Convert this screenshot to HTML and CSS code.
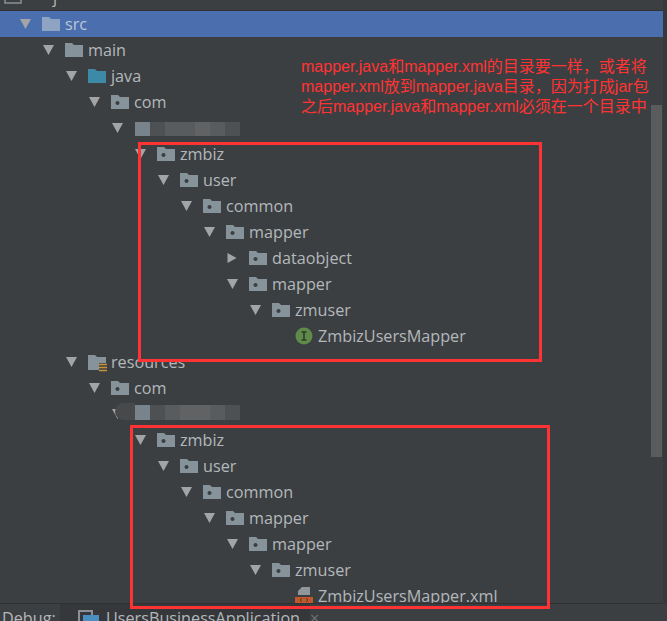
FILE: index.html
```html
<!DOCTYPE html>
<html lang="en">
<head>
    <meta charset="UTF-8">
    <meta name="viewport" content="width=device-width, initial-scale=1.0">
    <title>Project tree</title>
    <link rel="stylesheet" href="styles.css">
</head>
<body>

<svg class="defs" width="0" height="0">
    <symbol id="open" viewBox="0 0 11 10"><path d="M0 0H11L5.5 10Z"/></symbol>
    <symbol id="closed" viewBox="0 0 11 11"><path d="M0 0L10 5.5L0 11Z"/></symbol>
    <symbol id="folder" viewBox="0 0 18 14"><path d="M0 0H7L9 2H18V14H0Z"/></symbol>
    <symbol id="package" viewBox="0 0 18 14"><path fill-rule="evenodd" d="M0 0H7L9 2H18V14H0ZM6.5 6A2 2 0 1 0 6.51 6Z"/></symbol>
</svg>

<div class="top-bar">
    <svg class="top-icon" width="18" height="4"><path d="M1 0V3H17V0" fill="none" stroke="#8b9197" stroke-width="1.5"/></svg>
    <span class="top-label">j</span>
</div>

<div class="tree">
    <div class="row lv-0 selected"><svg class="arrow"><use href="#open"/></svg><svg class="icon icon-src"><use href="#folder"/></svg><span>src</span></div>
    <div class="row lv-1"><svg class="arrow"><use href="#open"/></svg><svg class="icon"><use href="#folder"/></svg><span>main</span></div>
    <div class="row lv-2"><svg class="arrow"><use href="#open"/></svg><svg class="icon icon-java"><use href="#folder"/></svg><span>java</span></div>
    <div class="row lv-3"><svg class="arrow"><use href="#open"/></svg><svg class="icon"><use href="#package"/></svg><span>com</span></div>
    <div class="row lv-4"><svg class="arrow"><use href="#open"/></svg></div>
    <div class="row lv-5"><svg class="arrow"><use href="#open"/></svg><svg class="icon"><use href="#package"/></svg><span>zmbiz</span></div>
    <div class="row lv-6"><svg class="arrow"><use href="#open"/></svg><svg class="icon"><use href="#package"/></svg><span>user</span></div>
    <div class="row lv-7"><svg class="arrow"><use href="#open"/></svg><svg class="icon"><use href="#package"/></svg><span>common</span></div>
    <div class="row lv-8"><svg class="arrow"><use href="#open"/></svg><svg class="icon"><use href="#package"/></svg><span>mapper</span></div>
    <div class="row lv-9"><svg class="arrow"><use href="#closed"/></svg><svg class="icon"><use href="#package"/></svg><span>dataobject</span></div>
    <div class="row lv-9"><svg class="arrow"><use href="#open"/></svg><svg class="icon"><use href="#package"/></svg><span>mapper</span></div>
    <div class="row lv-10"><svg class="arrow"><use href="#open"/></svg><svg class="icon"><use href="#package"/></svg><span>zmuser</span></div>
    <div class="row lv-11">
        <span class="no-arrow"></span>
        <svg class="icon icon-file" viewBox="0 0 18 18">
            <circle cx="9" cy="9" r="8.5" fill="#5e8a4a"/>
            <path d="M6.5 5H11.5M9 5V13M6.5 13H11.5" fill="none" stroke="#2f3a2c" stroke-width="1.6"/>
        </svg>
        <span>ZmbizUsersMapper</span>
    </div>
    <div class="row lv-2">
        <svg class="arrow"><use href="#open"/></svg>
        <svg class="icon icon-res" viewBox="0 0 20 18">
            <path d="M0 0H7L9 2H18V8H11V15H0Z" fill="#87939a"/>
            <path d="M11 9.5H19M11 12.5H19M11 15.5H19" fill="none" stroke="#c9953c" stroke-width="1.6"/>
        </svg>
        <span>resources</span>
    </div>
    <div class="row lv-3"><svg class="arrow"><use href="#open"/></svg><svg class="icon"><use href="#package"/></svg><span>com</span></div>
    <div class="row lv-4"><svg class="arrow"><use href="#open"/></svg></div>
    <div class="row lv-5"><svg class="arrow"><use href="#open"/></svg><svg class="icon"><use href="#package"/></svg><span>zmbiz</span></div>
    <div class="row lv-6"><svg class="arrow"><use href="#open"/></svg><svg class="icon"><use href="#package"/></svg><span>user</span></div>
    <div class="row lv-7"><svg class="arrow"><use href="#open"/></svg><svg class="icon"><use href="#package"/></svg><span>common</span></div>
    <div class="row lv-8"><svg class="arrow"><use href="#open"/></svg><svg class="icon"><use href="#package"/></svg><span>mapper</span></div>
    <div class="row lv-9"><svg class="arrow"><use href="#open"/></svg><svg class="icon"><use href="#package"/></svg><span>mapper</span></div>
    <div class="row lv-10"><svg class="arrow"><use href="#open"/></svg><svg class="icon"><use href="#package"/></svg><span>zmuser</span></div>
    <div class="row lv-11">
        <span class="no-arrow"></span>
        <svg class="icon icon-file" viewBox="0 0 18 18">
            <path d="M7 0H15V8H3V4Z" fill="#8f979c"/>
            <rect y="10" width="18" height="8" fill="#c2582a"/>
            <path d="M7 11L5 13L7 15M11 11L13 13L11 15" fill="none" stroke="#3c3f41" stroke-width="1"/>
        </svg>
        <span>ZmbizUsersMapper.xml</span>
    </div>

    <!-- Verborgen pakketnamen -->
    <div class="mosaic mosaic-java">
        <i class="m1"></i><i class="m2"></i><i class="m3"></i><i class="m3"></i><i class="m4"></i><i class="m3"></i><i class="m2"></i>
    </div>
    <div class="mosaic mosaic-res">
        <i class="m1"></i><i class="m2"></i><i class="m3"></i><i class="m4"></i><i class="m4"></i><i class="m3"></i><i class="m2"></i>
    </div>

    <!-- Aantekening -->
    <div class="note">mapper.java和mapper.xml的目录要一样，或者将<br>mapper.xml放到mapper.java目录，因为打成jar包<br>之后mapper.java和mapper.xml必须在一个目录中</div>
</div>

<div class="scrollbar"></div>
<div class="right-strip"></div>

<div class="debug-bar">
    <span class="debug-label">Debug:</span>
    <div class="debug-tab">
        <svg class="tab-icon" width="22" height="18">
            <rect x="1" y="1" width="13" height="15" fill="none" stroke="#8b9197" stroke-width="2"/>
            <rect x="5" y="5" width="16" height="13" fill="#4a8fbf"/>
        </svg>
        <span>UsersBusinessApplication</span>
        <span class="tab-close">×</span>
    </div>
</div>

<!-- Rode kaders liggen ook over de debug balk -->
<div class="mark mark-java"></div>
<div class="mark mark-res"></div>

</body>
</html>
```

FILE: styles.css
```css
:root {
    --bg: #3c3f41;
    --rowHeight: 26px;
    --indent: 23px;
    --red: #ff3333;
}

html, body {
    margin: 0;
    padding: 0;
    height: 100%;
}

body {
    position: relative;
    display: flex;
    flex-direction: column;
    height: 621px;
    overflow: hidden;
    background-color: var(--bg);
    font-family: "Open Sans", "Noto Sans", sans-serif;
    font-size: 16.2px;
    color: #b3b8bc;
}

.defs {
    position: absolute;
}

/* Top */
.top-bar {
    display: flex;
    flex: none;
    align-items: flex-start;
    height: 10px;
    padding-left: 4px;
    border-bottom: 1px solid #2f3133;
    overflow: hidden;
}

.top-label {
    margin: -14px 0 0 31px;
}

/* Tree */
.tree {
    position: relative;
    flex: 1;
    min-height: 0;
    overflow: hidden;
}

.row {
    display: flex;
    align-items: center;
    height: var(--rowHeight);
    white-space: nowrap;
}

.row.selected {
    background-color: #4b6eaf;
    color: #bcc6d6;
}

.arrow {
    flex: none;
    width: 11px;
    height: 10px;
    margin-right: 11px;
    fill: #a2a4a6;
}

.no-arrow {
    flex: none;
    width: 22px;
}

.icon {
    flex: none;
    width: 18px;
    height: 14px;
    margin-right: 5px;
    fill: #87939a;
}

.icon-file {
    height: 18px;
}

.icon-res {
    width: 20px;
    height: 18px;
    margin-right: 3px;
    transform: translateY(2px);
}

.icon-src {
    fill: #8fa3c3;
}

.icon-java {
    fill: #3d8aa8;
}

.lv-0 { padding-left: 20px; }
.lv-1 { padding-left: 43px; }
.lv-2 { padding-left: 66px; }
.lv-3 { padding-left: 89px; }
.lv-4 { padding-left: 112px; }
.lv-5 { padding-left: 135px; }
.lv-6 { padding-left: 158px; }
.lv-7 { padding-left: 181px; }
.lv-8 { padding-left: 204px; }
.lv-9 { padding-left: 227px; }
.lv-10 { padding-left: 250px; }
.lv-11 { padding-left: 273px; }

/* Mosaic */
.mosaic {
    position: absolute;
    left: 135px;
    display: flex;
    width: 105px;
    height: 14px;
}

.mosaic-java {
    top: 111px;
}

.mosaic-res {
    top: 394px;
    height: 15px;
}

.mosaic-res::before {
    content: "";
    position: absolute;
    left: -20px;
    top: -2px;
    width: 20px;
    height: 17px;
    border-radius: 10px 0 0 10px;
    background-color: #47494b;
}

.mosaic i {
    flex: 1;
}

.m1 { background-color: #78838c; }
.m2 { background-color: #4e5153; }
.m3 { background-color: #595c5e; }
.m4 { background-color: #606264; }

/* Annotation */
.note {
    position: absolute;
    left: 301px;
    top: 46px;
    font-family: "Liberation Sans", "Noto Sans CJK SC", sans-serif;
    font-size: 16px;
    line-height: 20px;
    color: var(--red);
    white-space: nowrap;
}

.mark {
    position: absolute;
    box-sizing: border-box;
    border: 3px solid var(--red);
}

.mark-java {
    left: 138px;
    top: 142px;
    width: 404px;
    height: 220px;
}

.mark-res {
    left: 130px;
    top: 425px;
    width: 420px;
    height: 184px;
}

/* Scrollbar */
.scrollbar {
    position: absolute;
    left: 651px;
    top: 105px;
    width: 11px;
    height: 352px;
    background-color: #595b5d;
}

.right-strip {
    position: absolute;
    right: 0;
    top: 0;
    width: 4px;
    height: 604px;
    background-color: #36393b;
}

/* Debug */
.debug-bar {
    display: flex;
    flex: none;
    height: 17px;
    border-top: 1px solid #2f3133;
    background-color: #3c3f41;
    overflow: hidden;
    white-space: nowrap;
}

.debug-label {
    width: 60px;
    padding-left: 2px;
    box-sizing: border-box;
    line-height: 28px;
}

.debug-tab {
    display: flex;
    width: 250px;
    padding-left: 18px;
    box-sizing: border-box;
    background-color: #35373a;
    line-height: 28px;
}

.tab-icon {
    flex: none;
    margin: 6px 6px 0 0;
}

.tab-close {
    margin-left: 10px;
    color: #707274;
}
```
